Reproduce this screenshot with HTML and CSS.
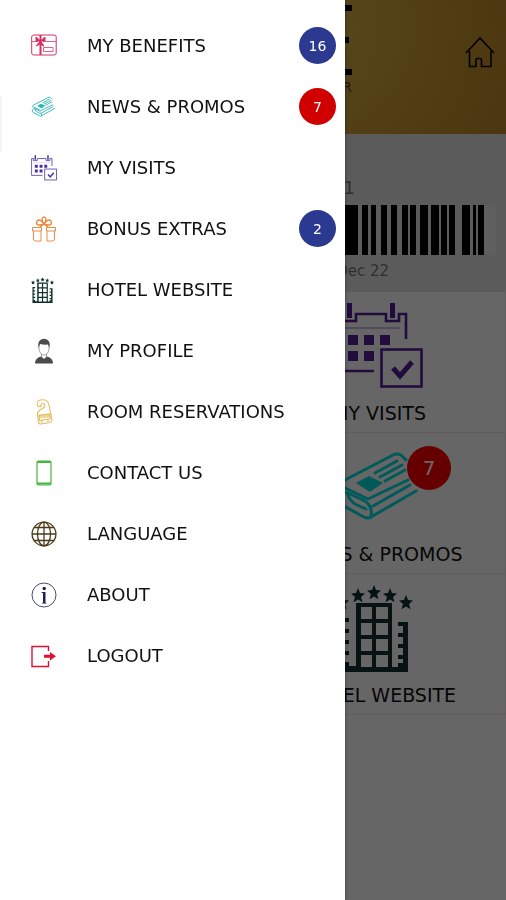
FILE: index.html
```html
<!DOCTYPE html>
<html lang="en">
<head>
<meta charset="utf-8">
<meta name="viewport" content="width=device-width, initial-scale=1">
<title>Menu</title>
<link rel="stylesheet" href="styles.css">
</head>
<body>
<svg class="sprite" aria-hidden="true">
  <symbol id="calendar" viewBox="0 0 88 88">
    <g fill="none" stroke="currentColor" stroke-width="2.6">
      <path d="M39 69H2V12H8V19H21V12H51V19H64V12H71V37"/>
      <path d="M8 26H65" stroke-width="1" opacity=".6"/>
      <rect x="46.500" y="47.500" width="40" height="37"/>
      <path d="M58 66L65 74L77 60" stroke-width="5"/>
    </g>
    <path fill="currentColor" d="M12 1h5v15h-5zM55 1h5v15h-5zM13 33h10v10H13zM29 33h10v10H29zM45 33h10v10H45zM13 49h10v10H13zM29 49h10v10H29z"/>
  </symbol>
  <symbol id="news" viewBox="0 0 88 88">
    <g fill="none" stroke="currentColor" stroke-width="3" stroke-linecap="round" stroke-linejoin="round">
      <path d="M73 37L33 56L6 43Q4 41 8 38L58 12Q62 10 66 12L71 17"/>
      <path d="M40 30L62 18M45 34L67 22M50 38L70 27"/>
      <path d="M38 63L75 42M81 48L36 74Q33 76 29 74L7 62Q2 58 5 53Q8 49 13 50L28 57Q38 62 36 73M13 51Q14 58 22 62L31 66"/>
    </g>
    <path fill="currentColor" d="M21 40L34 33L48 40L35 49z"/>
  </symbol>
  <symbol id="hotel" viewBox="0 0 88 88">
    <path fill="currentColor" d="M5 34h9v4H9v7h5v4H9v7h5v4H9v7h5v4H9v7h5v4h7V19h36v64h6v-4h5v-4h-5v-4h5v-7h-5v-4h5v-7h-5v-4h5v-7h-5v-4h10v53H5z"/>
    <path fill="var(--pane)" d="M26 23h11v12H26zM41 23h12v12H41zM26 39h11v12H26zM41 39h12v12H41zM26 55h11v12H26zM41 55h12v12H41zM26 71h11v12H26zM41 71h12v12H41z"/>
    <g fill="currentColor">
      <path id="star" d="M39 1l2 5 5 .4-4 3.600 1.500 5.200L39 12.500l-4.500 2.700L36 10l-4-3.600 5-.4z"/>
      <use href="#star" x="-16" y="3"/><use href="#star" x="16" y="3"/>
      <use href="#star" x="-32" y="10"/><use href="#star" x="32" y="10"/>
    </g>
  </symbol>
</svg>

<div class="page">
  <header class="top">
    <div class="brand">
      <i class="block"></i><i class="block dot"></i><i class="block"></i>
      <span>R</span>
    </div>
    <a class="home" href="#" aria-label="Home">
      <svg viewBox="0 0 32 32" fill="none" stroke="currentColor" stroke-width="1.600"><path d="M2 17L16 2L30 17M5.500 15V30.500H12V24Q12 22.500 13.500 22.500H16Q17.500 22.500 17.500 24V30.500H27V15"/></svg>
    </a>
  </header>
  <section class="card">
    <p class="number">1</p>
    <svg class="barcode" viewBox="0 0 486 50" preserveAspectRatio="none" aria-hidden="true">
      <rect width="486" height="50" fill="#eeeeee"/>
      <rect width="474" height="50" fill="#e4e4e4"/>
      <path d="M330 0h18v50h-18zM352 0h6v50h-6zM361 0h5v50h-5zM371 0h6v50h-6zM381 0h6v50h-6zM392 0h6v50h-6zM400 0h6v50h-6zM410 0h8v50h-8zM421 0h8v50h-8zM431 0h6v50h-6zM439 0h6v50h-6zM452 0h8v50h-8zM463 0h3v50h-3zM468 0h6v50h-6z"/>
    </svg>
    <p class="expiry">Dec 22</p>
  </section>
  <main class="tiles">
    <a class="tile" href="#">
      <span class="art purple"><svg><use href="#calendar"/></svg></span>
      <span>MY VISITS</span>
    </a>
    <a class="tile" href="#">
      <span class="art cyan"><svg><use href="#news"/></svg><b class="badge large">7</b></span>
      <span>NEWS &amp; PROMOS</span>
    </a>
    <a class="tile" href="#">
      <span class="art forest"><svg><use href="#hotel"/></svg></span>
      <span>HOTEL WEBSITE</span>
    </a>
  </main>
</div>
<div class="scrim"></div>

<nav class="drawer">
  <a href="#"><svg class="rose" viewBox="0 0 26 26" fill="none" stroke="currentColor"><rect x=".7" y="2" width="24.500" height="20" rx="2"/><path d="M1 8.500H7M12 8.500H25M12.500 18.500V14.500H22V18.500z" opacity=".75"/><path d="M9.500 2V22" stroke-width="2"/><path fill="currentColor" d="M9.500 8L5 4V8zM9.500 8L14 4V8zM9.500 8L5 13L9 11L13 13z"/></svg><span>MY BENEFITS</span><b class="badge">16</b></a>
  <a href="#"><svg class="teal"><use href="#news"/></svg><span>NEWS &amp; PROMOS</span><b class="badge red">7</b></a>
  <a href="#"><svg class="violet"><use href="#calendar"/></svg><span>MY VISITS</span></a>
  <a href="#"><svg class="orange" viewBox="0 0 26 26" fill="none" stroke="currentColor"><path d="M1.500 11.500H10.500V15H1.500zM15.500 11.500H24.500V15H15.500zM2.500 15V23Q2.500 25 4.500 25H10V15M23.500 15V23Q23.500 25 21.500 25H16V15"/><path stroke-width="1.400" d="M13 8Q4 11 6 5Q9 2 13 8Q22 11 20 5Q17 2 13 8Q9 2 13 .8Q17 2 13 8L9 11M13 8L17 11"/></svg><span>BONUS EXTRAS</span><b class="badge">2</b></a>
  <a href="#"><svg class="forest"><use href="#hotel"/></svg><span>HOTEL WEBSITE</span></a>
  <a href="#"><svg class="slate" viewBox="0 0 26 26"><path fill="currentColor" d="M4 25.500Q4 20 10 18.500L13 21L16 18.500Q22 20 22 25.500z"/><path fill="#fff" stroke="currentColor" stroke-width=".5" d="M8 7Q8 2 13 2T18 7V11Q17 17 13 17T8 11zM10.500 16V19L13 21L15.500 19V16"/><path fill="currentColor" d="M7.500 10Q6 1 13 .8Q20 1 18.500 10L17 6.500Q13 7 9 6z"/></svg><span>MY PROFILE</span></a>
  <a href="#"><svg class="gold" viewBox="0 0 26 26" fill="none" stroke="currentColor" stroke-width="1.100"><path d="M6.500 7Q5 1 11 .8Q17 .5 18 6L21 21Q21 23 19 23.500L10 25Q7.500 25 7.500 23L6.500 15Q6.500 13 9 11L13 8.500Q15 6 12.500 4.500Q9.500 4 10 7.500z"/><path d="M8 16.500L19 15V20L8.500 21.500zM11 22V24M17 21V23"/><path fill="currentColor" opacity=".6" d="M8 16L19 15V18L8 19z"/></svg><span>ROOM RESERVATIONS</span></a>
  <a href="#"><svg class="green" viewBox="0 0 26 26" fill="none" stroke="currentColor"><rect x="6" y="1" width="14" height="24" rx="1.500" stroke-width="1.200"/><path d="M6 2H20M6 23.500H20" stroke-width="2.200"/></svg><span>CONTACT US</span></a>
  <a href="#"><svg class="bronze" viewBox="0 0 26 26" fill="none" stroke="currentColor" stroke-width="1.300"><circle cx="13" cy="13" r="11.900"/><ellipse cx="13" cy="13" rx="6.500" ry="11.900"/><path d="M13 1V25M1 13H25M3 6.500H23M3 19.500H23"/></svg><span>LANGUAGE</span></a>
  <a href="#"><svg class="navy" viewBox="0 0 26 26" fill="none" stroke="currentColor"><circle cx="13" cy="13" r="12" opacity=".8"/><path fill="currentColor" stroke="none" d="M10.500 10H14.500V20.500L16 21.500H10.500L12 20.500V11L10.500 10.800z"/><circle cx="13.200" cy="6.500" r="1.700" fill="currentColor" stroke="none"/></svg><span>ABOUT</span></a>
  <a href="#"><svg class="red-ink" viewBox="0 0 26 26" fill="none" stroke="currentColor" stroke-width="1.400"><path d="M17.500 8V3.500H1V23.500H17.500V18"/><path fill="currentColor" stroke="none" d="M13 11.700H19V9L25 13.200L19 17.500V14.700H13z"/></svg><span>LOGOUT</span></a>
  <i class="handle"></i>
</nav>
</body>
</html>
```
FILE: styles.css
```css
* { box-sizing: border-box; }

body {
  margin: 0;
  min-height: 100vh;
  background: #fff;
  color: #111;
  font-family: Verdana, "DejaVu Sans", sans-serif;
  font-size: 18px;
}

a { color: inherit; text-decoration: none; }
p { margin: 0; }
.sprite { display: none; }

.violet { color: #46309c; }
.purple { color: #55209c; }
.teal { color: #2cb4b8; }
.cyan { color: #00e0e0; }
.forest { color: #10302e; }
.rose { color: #d62f61; }
.orange { color: #ec8a45; }
.slate { color: #4b4b4f; }
.gold { color: #e5bd62; }
.green { color: #43b83c; }
.bronze { color: #4a3a18; }
.navy { color: #1b2350; }
.red-ink { color: #dd1232; }

/* Home screen */
.top {
  position: relative;
  display: flex;
  justify-content: center;
  height: 134px;
  background: radial-gradient(circle at 60% 20%, #d9b64e, #c9982f 45%, #ac7420);
}
.brand {
  display: flex;
  flex-direction: column;
  align-items: flex-end;
  gap: 26px;
  width: 198px;
  padding-top: 5px;
}
.block { width: 20px; height: 6px; background: #000; }
.dot { margin-right: 3px; }
.brand span { margin-top: -22px; font-size: 14px; line-height: 16px; color: #54401a; }
.home {
  position: absolute;
  top: 36px;
  right: 10px;
  width: 32px;
  height: 32px;
  color: #000;
}
.home svg { display: block; width: 100%; height: 100%; }

.card {
  height: 158px;
  padding: 42px 10px 0;
  background: #e4e4e4;
  color: #777;
  text-align: right;
}
.number { padding-right: 29%; font-size: 18px; line-height: 24px; }
.barcode { display: block; width: 100%; height: 50px; margin-top: 5px; }
.expiry { padding-right: 22%; margin-top: 6px; font-size: 15px; line-height: 20px; }

.tiles { display: grid; grid-template-columns: 1fr 1fr; }
.tile {
  grid-column: 2;
  display: flex;
  flex-direction: column;
  align-items: center;
  gap: 11px;
  padding: 10px 0 7px;
  border-bottom: 1px solid #efe9e4;
  border-right: 1px solid #efe9e4;
  font-size: 19px;
  line-height: 24px;
  white-space: nowrap;
}
.art { position: relative; width: 88px; height: 88px; --pane: #fff; }
.art svg { display: block; width: 100%; height: 100%; }

.scrim { position: fixed; inset: 0; background: rgba(0, 0, 0, .6); }

/* Drawer */
.drawer {
  position: fixed;
  inset: 0 161px 0 0;
  padding-top: 15px;
  background: #fff;
  box-shadow: 0 0 4px rgba(0, 0, 0, .4);
  --pane: #fff;
}
.drawer a {
  display: flex;
  align-items: center;
  gap: 30px;
  height: 61px;
  padding: 0 9px 0 31px;
  white-space: nowrap;
}
.drawer svg { flex: none; width: 26px; height: 26px; }

.badge {
  display: grid;
  flex: none;
  place-items: center;
  width: 37px;
  height: 37px;
  margin-left: auto;
  border-radius: 50%;
  background: #2b3990;
  color: #fff;
  font-size: 14px;
  font-weight: 400;
}
.drawer .badge { margin-left: auto; }
.badge.red { background: #d00000; }
.badge.large {
  position: absolute;
  top: 3px;
  left: 72px;
  width: 44px;
  height: 44px;
  background: #ff0000;
  font-size: 20px;
}
.handle {
  position: absolute;
  top: 96px;
  left: 0;
  width: 2px;
  height: 56px;
  background: #f4f4f4;
}
```
